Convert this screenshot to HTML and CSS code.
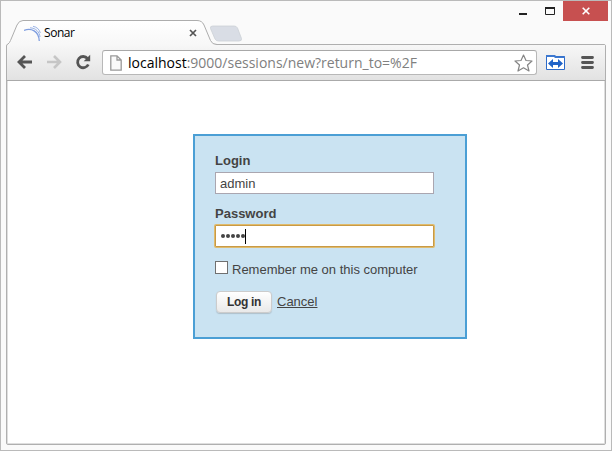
FILE: index.html
```html
<!DOCTYPE html>
<html lang="en">
<head>
<meta charset="utf-8">
<title>Sonar</title>
<link rel="stylesheet" href="styles.css">
</head>
<body>
<div class="window">
  <header class="tabstrip">
    <div class="tab">
      <svg class="tab-shape" width="260" height="26" viewBox="0 0 260 26">
        <defs><linearGradient id="tabfill" x1="0" y1="0" x2="0" y2="1"><stop offset="0" stop-color="#fff"/><stop offset="1" stop-color="#f7f7f7"/></linearGradient></defs>
        <path d="M0 26V25Q3 24 4.500 20.500L11 5Q13 .5 17 .5H191Q196 .5 198 5L204.500 20.500Q206 24.500 211 24.500V26Z" fill="url(#tabfill)"/>
        <path d="M.5 26Q.5 24.500 2 24Q3.500 23 4.500 20.500L11 5Q13 .5 17 .5H191Q196 .5 198 5L204.500 20.500Q206 24.500 211 24.500" fill="none" stroke="#adadad"/>
      </svg>
      <svg class="favicon" width="17" height="17" viewBox="0 0 17 17" fill="none" stroke="#809fe0"><path d="M0 5.500C7 2.500 15 6 15.300 16" stroke-width="1.300"/><path d="M6 2.800C12 3 15.500 7 16 12M9 1.300C13 2 15.500 4.500 16.300 8" stroke-width=".8"/></svg>
      <span class="tab-title">Sonar</span>
      <svg class="tab-close" width="8" height="8" viewBox="0 0 8 8"><path d="M1 1L7 7M7 1L1 7" stroke="#555" stroke-width="1.700"/></svg>
    </div>
    <svg class="new-tab" width="34" height="18" viewBox="0 0 34 18"><path d="M3.500 1H25Q27.500 1 28.500 3L32.500 13.500Q33 16 30 16H9.500Q7 16 6 14L1.500 3.500Q1 1 3.500 1Z" fill="#d9dde5" stroke="#ccd0d6" stroke-width=".8"/></svg>
    <div class="controls">
      <svg width="50" height="20" viewBox="0 0 50 20"><path d="M6 12H14V14H6Z" fill="#222"/><path d="M32.500 7.500H41.500V13.500H32.500Z" fill="none" stroke="#222"/><path d="M32 6H42V8H32Z" fill="#222"/></svg>
      <div class="close"><svg width="8" height="8" viewBox="0 0 8 8"><path d="M.7 .7L7.300 7.300M7.300 .7L.7 7.300" stroke="#fff" stroke-width="1.600"/></svg></div>
    </div>
  </header>
  <div class="frame">
    <nav class="toolbar">
      <svg class="back" width="16" height="14" viewBox="0 0 16 14" fill="none" stroke="#555" stroke-width="2.800"><path d="M2 7H15M8 1L2 7L8 13"/></svg>
      <svg class="forward" width="16" height="14" viewBox="0 0 16 14" fill="none" stroke="#c6c6c6" stroke-width="2.600"><path d="M1 7H14M8 1L14 7L8 13"/></svg>
      <svg class="reload" width="16" height="16" viewBox="0 0 16 16"><path d="M12.500 4.500A5.600 5.600 0 1 0 13.300 10.500" fill="none" stroke="#555" stroke-width="2.800"/><path d="M15.200 .8V7.300H8.700Z" fill="#555"/></svg>
      <div class="address">
        <svg class="page-icon" width="12" height="16" viewBox="0 0 12 16"><path d="M.8 .8H7L11.200 5V15.200H.8ZM7 .8V5H11.200" fill="#fafafa" stroke="#999" stroke-width="1.300"/></svg>
        <span class="url"><b>localhost</b>:9000/sessions/new?return_to=%2F</span>
        <svg class="star" width="19" height="18" viewBox="0 0 19 18"><path d="M9.500 1L12 6.500L18 7L13.500 11L15 17L9.500 13.800L4 17L5.500 11L1 7L7 6.500Z" fill="#fff" stroke="#858585" stroke-width="1.200" stroke-linejoin="round"/></svg>
      </div>
      <svg class="extension" width="19" height="15" viewBox="0 0 19 15"><path d="M.5 .5H8.500L9.500 1.500H18.500V14.500H.5Z" fill="#fff" stroke="#2d6bc8"/><path d="M0 0H9L10.500 1.500H19V3H9L8 2H0Z" fill="#3c78d0"/><path d="M2 8.500L7 4V7H12V4L17 8.500L12 13V10H7V13Z" fill="#1f63c8"/></svg>
      <svg class="menu" width="13" height="13" viewBox="0 0 13 13"><path d="M1.500 1.500H11.500M1.500 6.500H11.500M1.500 11.500H11.500" stroke="#555" stroke-width="2.800" stroke-linecap="round"/></svg>
    </nav>
    <main class="page">
      <form class="login">
        <label class="label login-label">Login</label>
        <div class="field">admin</div>
        <label class="label password-label">Password</label>
        <div class="field focused"><i></i><i></i><i></i><i></i><i></i><span class="caret"></span></div>
        <div class="remember"><span class="checkbox"></span><span class="remember-text">Remember me on this computer</span></div>
        <div class="actions"><button class="submit" type="button">Log in</button><a class="cancel">Cancel</a></div>
      </form>
    </main>
  </div>
</div>
</body>
</html>
```
FILE: styles.css
```css
* { box-sizing: border-box; }
body { margin: 0; overflow: hidden; }
svg { display: block; flex: none; }
.window {
  width: 612px;
  height: 451px;
  border: 1px solid #bababa;
  background: #fafafa;
  padding: 0 5px 5px;
  display: flex;
  flex-direction: column;
}
.tabstrip {
  height: 43px;
  flex: none;
  display: flex;
  align-items: flex-start;
  position: relative;
  z-index: 1;
}
.tab {
  width: 204px;
  height: 26px;
  margin-top: 19px;
  display: flex;
  align-items: flex-start;
  position: relative;
}
.tab-shape { position: absolute; left: 0; top: 0; }
.favicon { margin: 5px 0 0 18px; position: relative; }
.tab-title {
  position: relative;
  margin: 5px auto 0 3px;
  font: 12px/16px "Open Sans", sans-serif;
  letter-spacing: -0.45px;
  color: #000;
}
.tab-close { position: relative; margin: 9px 13px 0 0; }
.new-tab { margin: 24px 0 0 -1px; }
.controls { margin-left: auto; margin-right: -2px; display: flex; }
.close {
  width: 45px;
  height: 20px;
  background: #c75050;
  display: flex;
  align-items: center;
  justify-content: center;
}
.frame {
  flex: 1;
  border: 1px solid #afafaf;
  border-radius: 2px;
  background: #fff;
  box-shadow: inset 0 0 0 1px #dedede;
  display: flex;
  flex-direction: column;
}
.toolbar {
  height: 36px;
  flex: none;
  background: linear-gradient(#f7f7f7, #e2e2e2);
  border-bottom: 1px solid #aaa;
  display: flex;
  align-items: center;
  padding: 0 0 1px 10px;
}
.forward { margin-left: 13px; }
.reload { margin-left: 13px; }
.address {
  width: 435px;
  height: 25px;
  margin-left: 11px;
  margin-top: 1px;
  border: 1px solid #b8b8b8;
  border-top-color: #a8a8a8;
  border-radius: 3px;
  background: #fff;
  display: flex;
  align-items: center;
}
.page-icon { margin-left: 7px; }
.url {
  margin-left: 6px;
  font: 14px/20px "Open Sans", sans-serif;
  color: #808080;
  white-space: nowrap;
}
.url b { font-weight: 400; color: #000; }
.star { margin-left: auto; margin-right: 3px; }
.extension { margin-left: 9px; }
.menu { margin-left: 16px; }
.page { flex: 1; padding: 53px 0 0 186px; }
.login {
  width: 274px;
  height: 205px;
  border: 2px solid #4b9fd5;
  background: #cae3f2;
  padding: 17px 0 0 20px;
  font: 13px/16px "Liberation Sans", Arial, sans-serif;
  color: #444;
  display: flex;
  flex-direction: column;
  align-items: flex-start;
}
.label { font-weight: 700; line-height: 16px; }
.login-label { margin-bottom: 3px; }
.password-label { margin: 12px 0 3px; }
.field {
  width: 219px;
  height: 22px;
  border: 1px solid #aaa6b0;
  background: #fff;
  padding: 2px 4px 0;
  display: flex;
  align-items: center;
}
.field.focused { border-color: #c99a45; box-shadow: 0 0 0 1px #dfbb6d; border-radius: 1px; padding: 0 4px; }
.field i { width: 4px; height: 4px; border-radius: 50%; background: #444; margin-left: 1px; }
.caret { width: 1px; height: 15px; background: #000; }
.remember { display: flex; align-items: flex-start; margin-top: 14px; }
.checkbox { width: 13px; height: 13px; border: 1px solid #707070; background: #fff; }
.remember-text { margin: 1px 0 0 4px; }
.actions { display: flex; align-items: flex-start; margin: 13px 0 0 1px; }
.submit {
  width: 56px;
  height: 22px;
  padding: 0;
  border: 1px solid #ccc;
  border-radius: 4px;
  background: linear-gradient(#fff, #e9e9e9);
  box-shadow: 0 1px 1px #aebfca;
  font: bold 12px/20px "Liberation Sans", Arial, sans-serif;
  letter-spacing: -0.3px;
  color: #333;
}
.cancel { margin: 3px 0 0 5px; text-decoration: underline; }
```
